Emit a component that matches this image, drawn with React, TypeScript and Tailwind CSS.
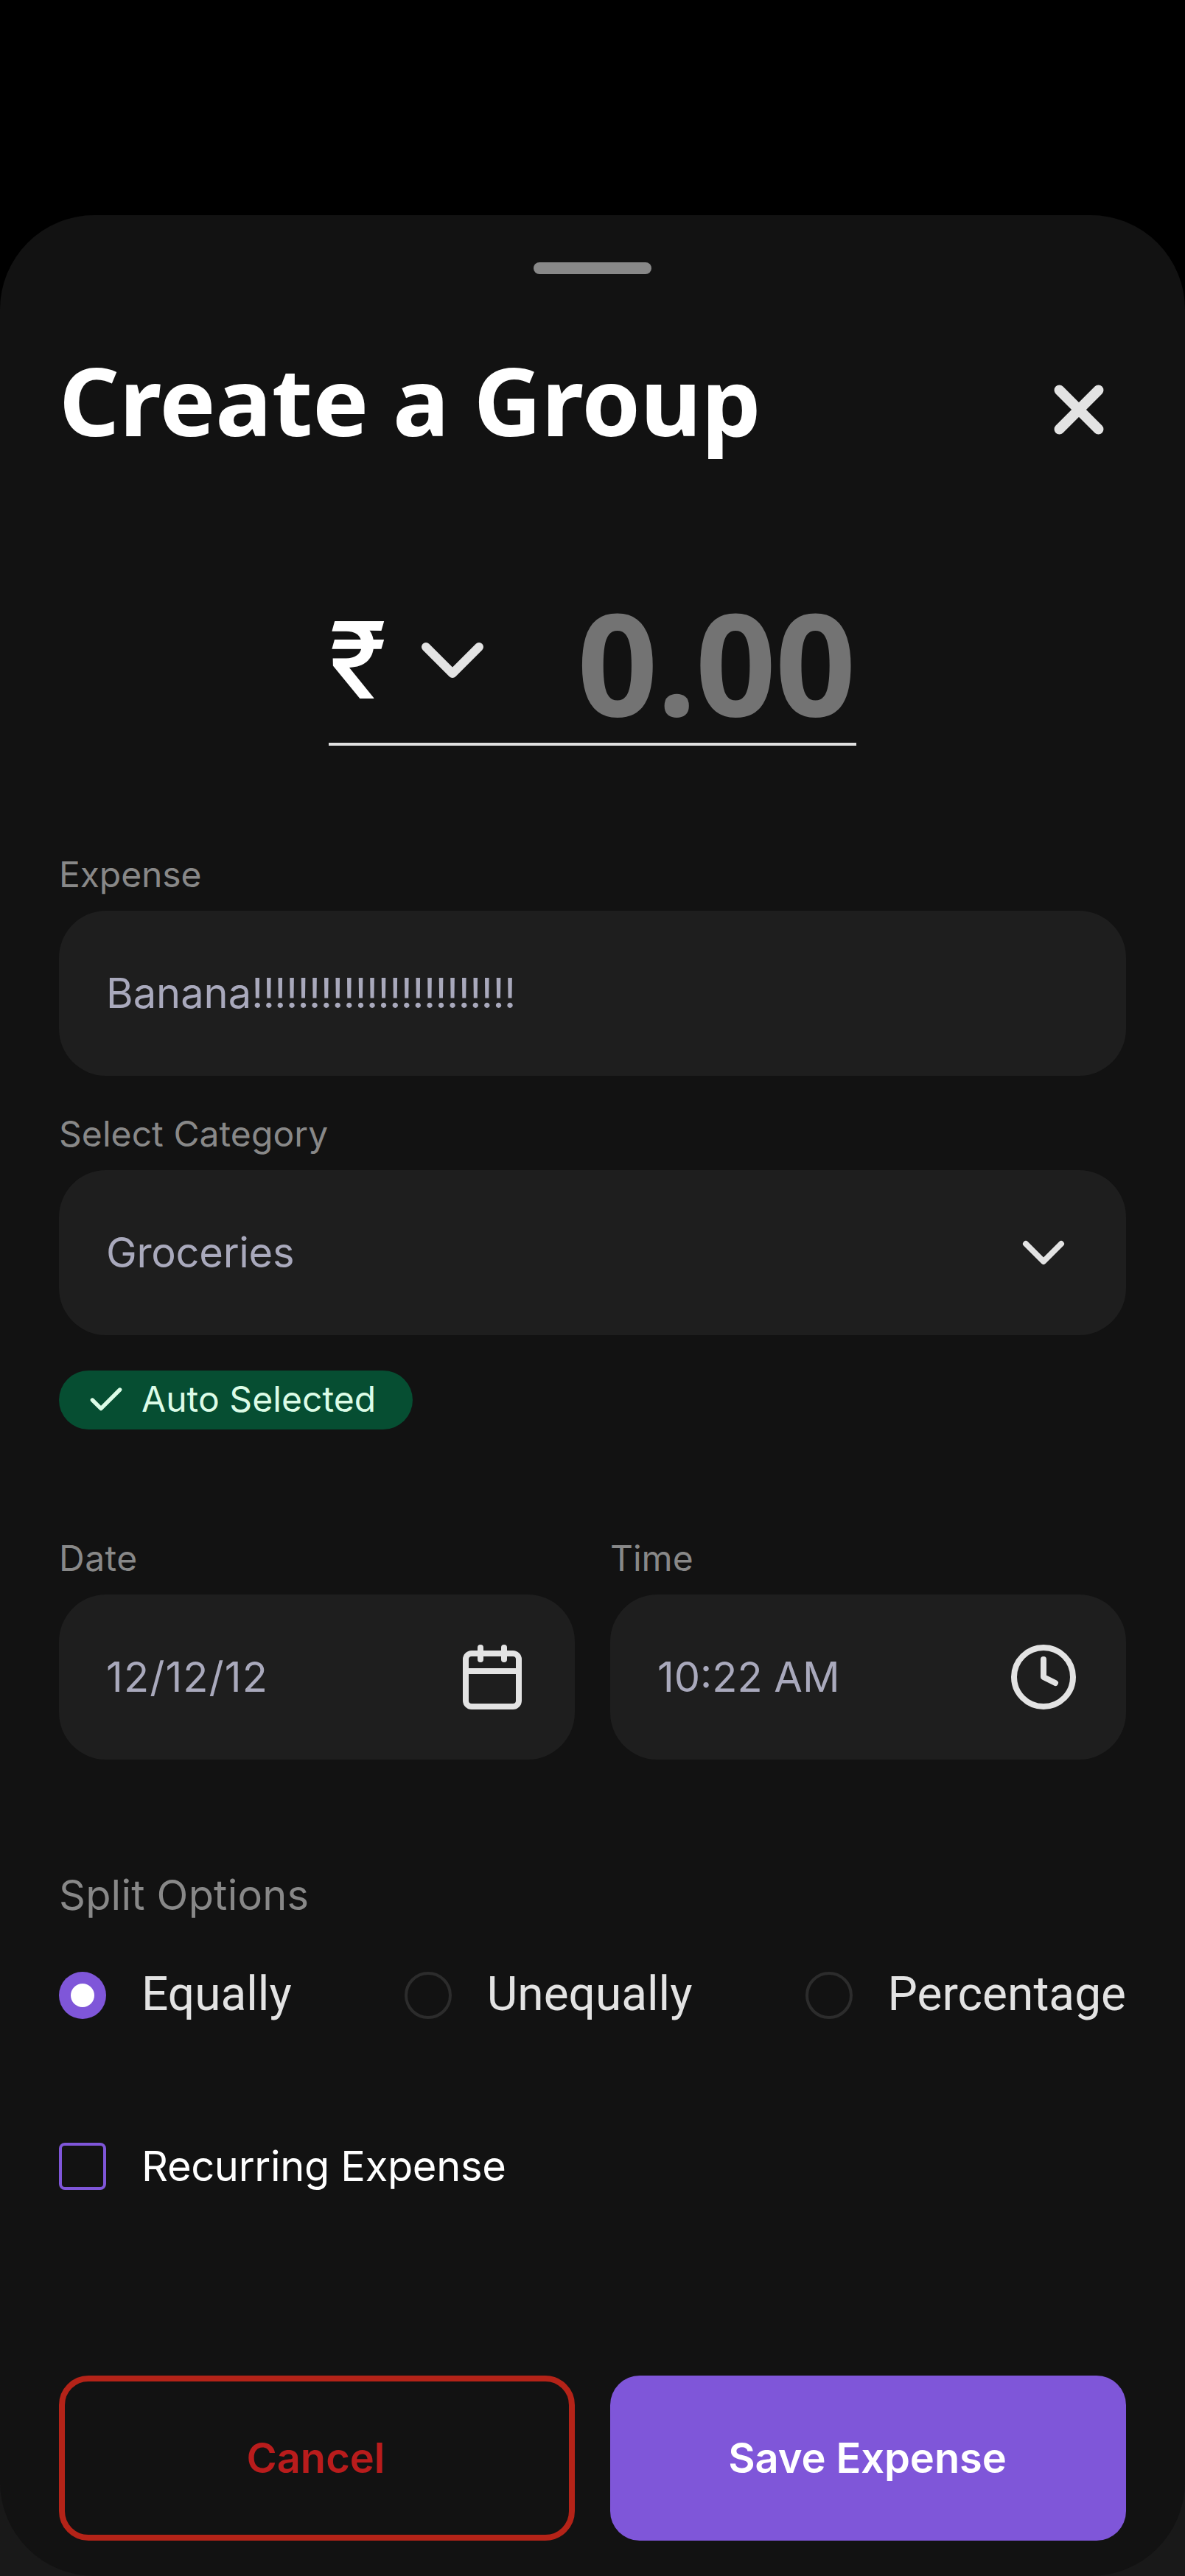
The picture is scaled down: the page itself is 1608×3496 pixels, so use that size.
import React from "react";
import { Calendar, Check, ChevronDown, Clock, X } from "lucide-react";

function Label({ children, className = "" }: { children: React.ReactNode; className?: string }) {
  return (
    <div className={`mb-4 h-[68px] text-[48px] leading-[70px] text-[#888888] ${className}`}>
      {children}
    </div>
  );
}

function Field({ children, icon }: { children: React.ReactNode; icon?: React.ReactNode }) {
  return (
    <div className="flex h-56 w-full items-center justify-between rounded-[64px] bg-[#1e1e1e] px-16 text-[56px] text-[#a9a9bc]">
      {children}
      {icon}
    </div>
  );
}

function Radio({ label, checked }: { label: string; checked?: boolean }) {
  return (
    <div className="flex items-center gap-12">
      {checked ? (
        <span className="flex size-16 items-center justify-center rounded-full bg-[#7f56d9]">
          <span className="size-8 rounded-full bg-white" />
        </span>
      ) : (
        <span className="size-16 rounded-full border-4 border-[#2c2c2c]" />
      )}
      <span className="-mt-[3px] font-['Roboto',sans-serif] text-[64px] leading-[80px] text-[#e3e3e3]">
        {label}
      </span>
    </div>
  );
}

export default function App() {
  return (
    <div className="h-[3496px] w-[1608px] overflow-hidden bg-[linear-gradient(to_bottom,#000000_50%,#191919_50%)] pt-[292px] font-['Inter',sans-serif]">
      <main className="flex h-[3204px] w-full flex-col rounded-[128px] bg-[#121212] px-20 pt-16">
        <div className="h-4 w-40 shrink-0 self-center rounded-full bg-[#888888]" />

        <header className="mt-[92px] flex h-[176px] items-center justify-between">
          <h1 className="-mt-[18px] font-['Noto_Sans',sans-serif] text-[128px] leading-[176px] font-bold tracking-[-0.3px] text-white">
            Create a Group
          </h1>
          <button className="mt-2 flex size-32 items-center justify-center text-[#e3e3e3]">
            <X size={106} strokeWidth={3.15} />
          </button>
        </header>

        <div className="mt-[156px] flex h-[216px] w-[716px] items-center justify-between self-center border-b-4 border-[#e0e0e0]">
          <div className="-mt-3 flex items-center">
            <span className="w-24 text-[144px] leading-[196px] font-medium text-white">₹</span>
            <ChevronDown className="size-36 shrink-0 text-[#e3e3e3]" strokeWidth={2} />
          </div>
          <span className="-mt-2 mr-0.5 font-['Noto_Sans',sans-serif] text-[192px] leading-[216px] font-bold tracking-[-1.6px] text-[#737373]">
            0.00
          </span>
        </div>

        <section className="mt-[140px]">
          <Label className="tracking-[-0.1px]">Expense</Label>
          <Field>
            <span className="whitespace-nowrap">
              Banana<span className="tracking-[-0.52px]">!!!!!!!!!!!!!!!!!!!!!!!</span>
            </span>
          </Field>
        </section>

        <section className="mt-11">
          <Label className="tracking-[0.06px]">Select Category</Label>
          <Field icon={<ChevronDown className="size-24 text-[#e3e3e3]" strokeWidth={2} />}>
            <span className="tracking-[-0.3px]">Groceries</span>
          </Field>
          <div className="mt-12 flex h-20 w-[480px] items-center gap-5 rounded-full bg-[#064e32] pl-9 text-[48px] tracking-[0.06px] text-[#dcfce7]">
            <Check className="size-14" strokeWidth={2.3} />
            <span className="-mt-0.5 whitespace-nowrap">Auto Selected</span>
          </div>
        </section>

        <section className="mt-[140px] grid grid-cols-2 gap-12">
          <div>
            <Label className="tracking-[0.5px]">Date</Label>
            <Field icon={<Calendar className="size-24 text-[#e3e3e3]" strokeWidth={2} />}>
              <span className="tracking-[1.1px]">12/12/12</span>
            </Field>
          </div>
          <div>
            <Label>Time</Label>
            <Field icon={<Clock className="size-24 text-[#e3e3e3]" strokeWidth={2} />}>
              <span>10:22 AM</span>
            </Field>
          </div>
        </section>

        <section className="mt-36">
          <div className="text-[56px] leading-[80px] tracking-[0.2px] text-[#888888]">
            Split Options
          </div>
          <div className="mt-14 flex h-20 items-center justify-between">
            <Radio label="Equally" checked />
            <Radio label="Unequally" />
            <Radio label="Percentage" />
          </div>
        </section>

        <div className="mt-[152px] flex h-20 items-center gap-12">
          <span className="size-16 rounded-lg border-4 border-[#7f56d9]" />
          <span className="text-[56px] leading-[80px] tracking-[-0.33px] text-white">
            Recurring Expense
          </span>
        </div>

        <div className="mt-[244px] grid grid-cols-2 gap-12 text-[56px] font-semibold">
          <button className="h-56 rounded-[40px] border-8 border-[#b42318] pr-[3px] text-[#b91c1c]">
            Cancel
          </button>
          <button className="h-56 rounded-[40px] bg-[#7f56d9] pr-0.5 tracking-[-0.1px] text-white">
            Save Expense
          </button>
        </div>
      </main>
    </div>
  );
}
